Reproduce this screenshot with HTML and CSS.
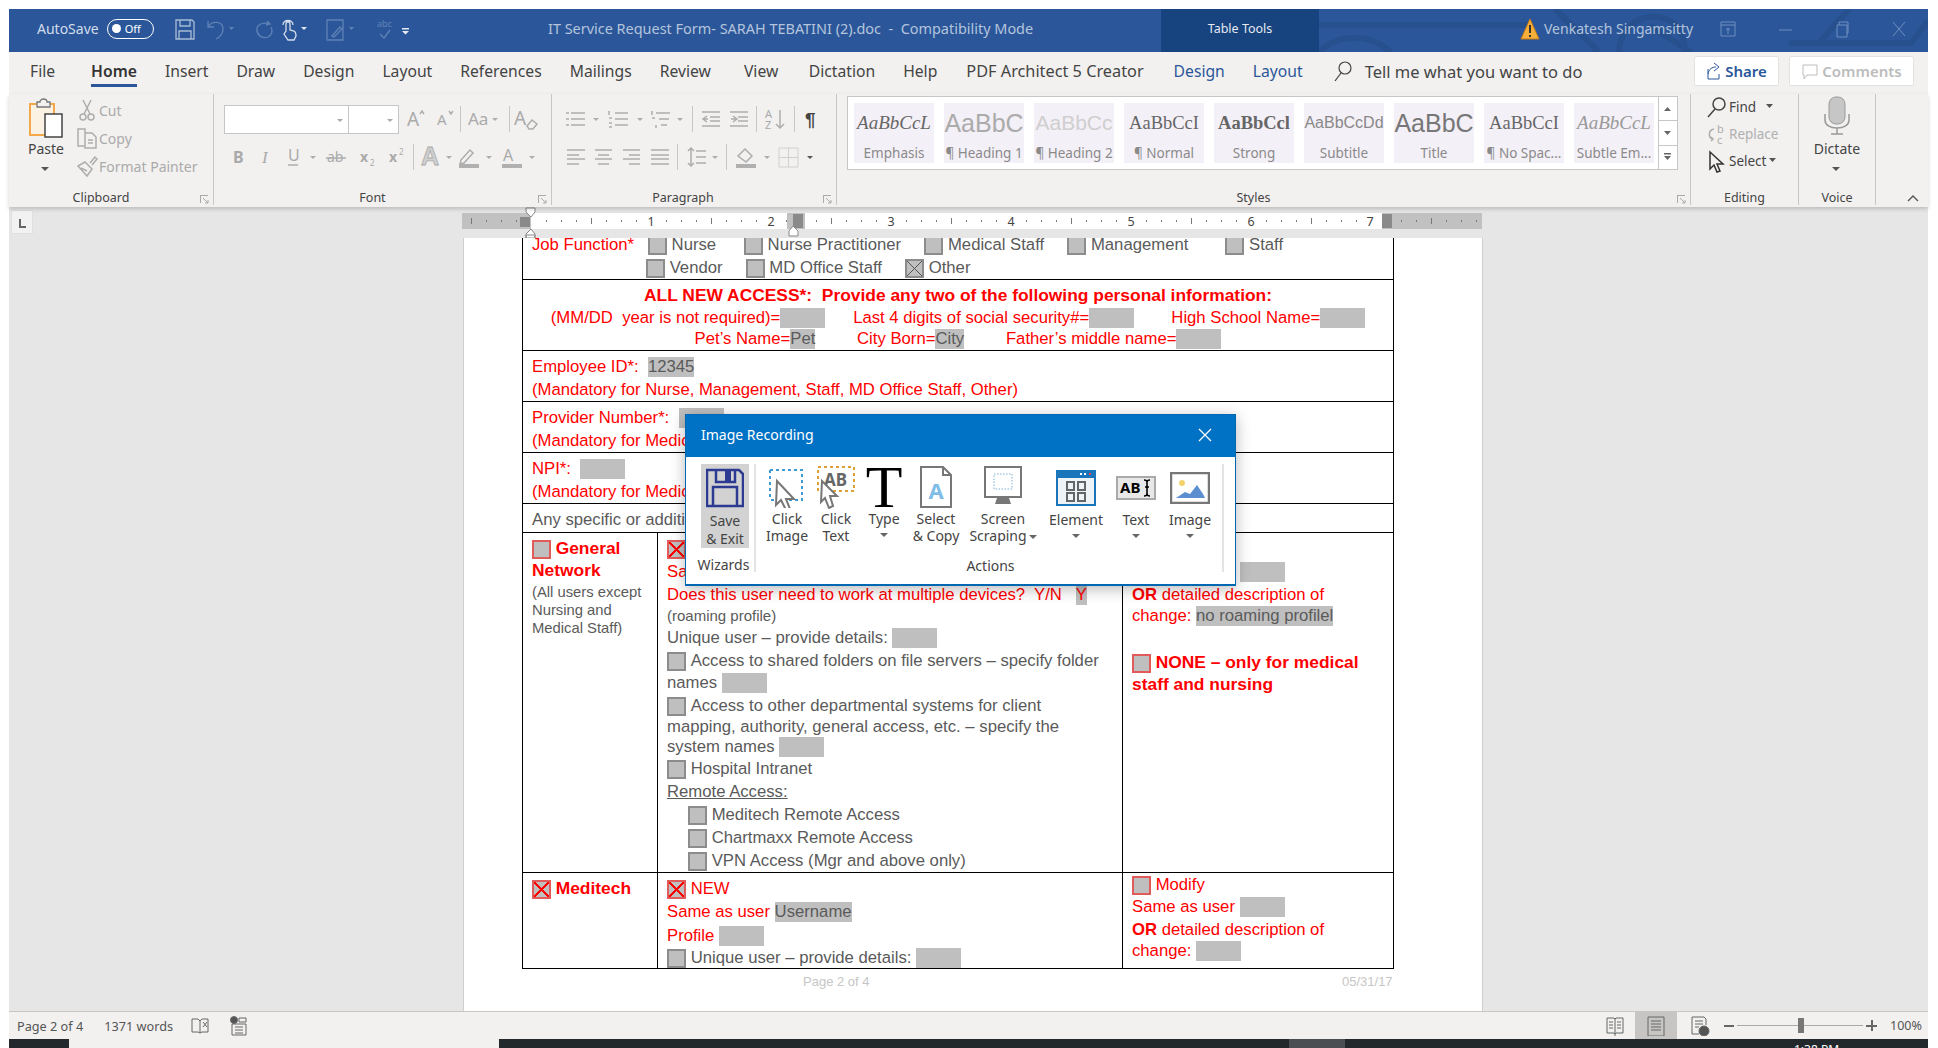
FILE: index.html
```html
<!DOCTYPE html>
<html lang="en">
<head>
  <meta charset="utf-8">
  <title>IT Service Request Form - Word</title>
  <link rel="stylesheet" href="styles.css">
</head>
<body>
<div class="window">

  <header class="titlebar">
    <svg class="deco" width="609" height="43" viewBox="0 0 609 43">
      <path d="M0 16H210M0 43C20 24 50 24 72 43M300 43C300 0 366 -8 366 43M236 0L280 43M330 16L372 43M470 34H592L609 12M500 34L530 0" />
    </svg>
    <span class="autosave">AutoSave</span>
    <span class="toggle"><i></i>Off</span>
    <svg class="q" width="22" height="24" viewBox="0 0 22 24"><path class="qs" d="M2 3h16l2 2v17H2zM6 3v6h10V3M5 22v-8h12v8"/></svg>
    <svg class="q dim" width="40" height="24" viewBox="0 0 40 24"><path d="M4 4v6h6M4 10C8 3 19 4 19 12c0 5-3 8-7 10"/><path class="qf" d="M25 10h5l-2.500 3z"/></svg>
    <svg class="q dim" width="26" height="24" viewBox="0 0 26 24"><path d="M15 4l3 3-4 1M18 7C9 4 4 9 5 14c1 5 6 8 11 6 4-2 5-6 3-10"/></svg>
    <svg class="q lite" width="38" height="24" viewBox="0 0 38 24"><path d="M8 14V7c0-3 4-3 4 0v6l4 1c2 1 2 3 2 5l-2 4h-6l-4-6zM5 8c0-6 10-6 10 0"/><path class="qf" d="M23 10h6l-3 3z"/></svg>
    <svg class="q dim" width="40" height="24" viewBox="0 0 40 24"><path d="M3 3h16v20H3zM8 19l8-9 2 2-8 8z"/><path class="qf" d="M25 10h5l-2.500 3z"/></svg>
    <svg class="q dim" width="28" height="24" viewBox="0 0 28 24"><text x="5" y="10">abc</text><path d="M8 17l4 4 6-8"/></svg>
    <svg class="q lite" width="12" height="24" viewBox="0 0 12 24"><path class="qf" d="M2 11h7v1.500H2zM2 14h7l-3.500 3.500z"/></svg>
    <span class="doctitle">IT Service Request Form- SARAH TEBATINI (2).doc&nbsp; -&nbsp; Compatibility Mode</span>
    <span class="tabletools">Table Tools</span>
    <svg class="warn" width="20" height="24" viewBox="0 0 20 24"><path d="M10 2l9 20H1z"/><path class="wm" d="M9 8h2v8H9zM9 18h2v2H9z"/></svg>
    <span class="user">Venkatesh Singamsitty</span>
    <span class="winbtns">
      <svg width="18" height="18" viewBox="0 0 18 18"><path d="M2 2h14v14H2zM2 5h14M9 14V8M7 10l2-2 2 2"/></svg>
      <svg width="18" height="18" viewBox="0 0 18 18"><path d="M3 10h13"/></svg>
      <svg width="18" height="18" viewBox="0 0 18 18"><path d="M4 5h10v12H4zM6 5V2h9v11h-1"/></svg>
      <svg width="18" height="18" viewBox="0 0 18 18"><path d="M3 2l12 14M15 2L3 16"/></svg>
    </span>
  </header>

  <nav class="tabs">
    <a class="tab first">File</a>
    <a class="tab on">Home</a>
    <a class="tab">Insert</a>
    <a class="tab">Draw</a>
    <a class="tab">Design</a>
    <a class="tab">Layout</a>
    <a class="tab">References</a>
    <a class="tab">Mailings</a>
    <a class="tab">Review</a>
    <a class="tab view">View</a>
    <a class="tab dict">Dictation</a>
    <a class="tab">Help</a>
    <a class="tab pdf">PDF Architect 5 Creator</a>
    <a class="tab blue first-ctx">Design</a>
    <a class="tab blue">Layout</a>
    <svg class="tellicon" width="20" height="24" viewBox="0 0 20 24"><circle cx="12" cy="9" r="6"/><path d="M8 14l-6 8"/></svg>
    <span class="tell">Tell me what you want to do</span>
    <span class="sharebtn"><svg width="16" height="20" viewBox="0 0 16 20"><path d="M2 8v10h11v-5M2 13C3 8 6 6 10 6M8 2l5 4-5 4"/></svg>Share</span>
    <span class="commentbtn"><svg width="18" height="20" viewBox="0 0 18 20"><path d="M2 4h14v10H6l-3 4v-4H2z"/></svg>Comments</span>
  </nav>

  <section class="ribbon">
    <div class="grp clip">
      <div class="grpbody row">
        <div class="paste">
          <svg width="36" height="42" viewBox="0 0 36 42"><path class="p1" d="M2 7h24v31H2z"/><path class="p2" d="M9 9V5h3c0-4 7-4 7 0h3v5H9z"/><path class="p3" d="M17 17h17v23H17z"/></svg>
          <span>Paste</span>
          <svg class="pc" width="10" height="6" viewBox="0 0 10 6"><path d="M0 0h8L4 4z"/></svg>
        </div>
        <div class="cliplist">
          <div><svg class="i" width="23" height="24" viewBox="0 0 23 24"><path d="M7 2l7 14M15 2L8 16"/><circle cx="7" cy="19" r="3"/><circle cx="15" cy="19" r="3"/></svg>Cut</div>
          <div><svg class="i" width="23" height="24" viewBox="0 0 23 24"><path d="M2 3h7v17H2zM9 7h7l4 4v11H9zM12 14h5M12 17h5"/></svg>Copy</div>
          <div><svg class="i" width="23" height="24" viewBox="0 0 23 24"><path d="M2 12l9 10 5-7-7-7zM14 9l5-6 2 2-5 6M5 14l6 3"/></svg>Format Painter</div>
        </div>
      </div>
      <div class="glabel">Clipboard</div>
      <svg class="launch" width="9" height="9" viewBox="0 0 9 9"><path d="M0 .5h8M.5 0v8M3 3l5 5M5 8h3V5"/></svg>
    </div>

    <div class="grp font">
      <div class="grpbody">
        <div class="frow">
          <span class="combo wide"><i></i></span><span class="combo"><i></i></span>
          <svg class="i" width="30" height="24" viewBox="0 0 30 24"><text x="8" y="19" class="big">A</text><path d="M21 7l2-3 2 3" /></svg>
          <svg class="i" width="28" height="24" viewBox="0 0 28 24"><text x="8" y="18" class="mid">A</text><path d="M20 4l2 3 2-3"/></svg>
          <span class="sep"></span>
          <svg class="i" width="42" height="24" viewBox="0 0 42 24"><text x="4" y="18" class="aa">Aa</text><path class="c" d="M28 11h6l-3 3z"/></svg>
          <span class="sep"></span>
          <svg class="i" width="28" height="24" viewBox="0 0 28 24"><text x="1" y="18" class="big">A</text><path d="M14 19l5-6 5 4-4 5h-4z"/></svg>
        </div>
        <div class="frow">
          <svg class="i" width="28" height="24" viewBox="0 0 28 24"><text x="9" y="18" class="bold">B</text></svg>
          <svg class="i" width="27" height="24" viewBox="0 0 27 24"><text x="10" y="18" class="ital">I</text></svg>
          <svg class="i" width="43" height="24" viewBox="0 0 43 24"><text x="9" y="16" class="mid2">U</text><path d="M9 20h10"/><path class="c" d="M31 11h6l-3 3z"/></svg>
          <svg class="i" width="29" height="24" viewBox="0 0 29 24"><text x="5" y="17" class="sm">ab</text><path d="M4 13h20"/></svg>
          <svg class="i" width="30" height="24" viewBox="0 0 30 24"><text x="9" y="17" class="bold sm">x</text><text x="19" y="21" class="tiny">2</text></svg>
          <svg class="i" width="29" height="24" viewBox="0 0 29 24"><text x="8" y="17" class="bold sm">x</text><text x="18" y="10" class="tiny">2</text></svg>
          <span class="sep"></span>
          <svg class="i" width="37" height="24" viewBox="0 0 37 24"><text x="4" y="20" class="huge">A</text><path class="c" d="M29 11h6l-3 3z"/></svg>
          <svg class="i" width="43" height="24" viewBox="0 0 43 24"><path d="M7 15l9-10 3 3-9 10-4 1z"/><path class="bar" d="M5 19h20v4H5z"/><path class="c" d="M32 11h6l-3 3z"/></svg>
          <svg class="i" width="42" height="24" viewBox="0 0 42 24"><text x="6" y="16" class="mid2">A</text><path class="bar" d="M5 19h20v4H5z"/><path class="c" d="M32 11h6l-3 3z"/></svg>
        </div>
      </div>
      <div class="glabel">Font</div>
      <svg class="launch" width="9" height="9" viewBox="0 0 9 9"><path d="M0 .5h8M.5 0v8M3 3l5 5M5 8h3V5"/></svg>
    </div>

    <div class="grp para">
      <div class="grpbody">
        <div class="frow">
          <svg class="i" width="44" height="24" viewBox="0 0 44 24"><path d="M6 6h3M6 12h3M6 18h3M11 6h14M11 12h14M11 18h14"/><path class="c" d="M33 11h6l-3 3z"/></svg>
          <svg class="i" width="42" height="24" viewBox="0 0 42 24"><path d="M5 4v4M5 11h3M5 16h3M5 20h3M11 6h13M11 12h13M11 18h13"/><path class="c" d="M33 11h6l-3 3z"/></svg>
          <svg class="i" width="43" height="24" viewBox="0 0 43 24"><path d="M6 4v4M6 11h3M10 18v3M10 6h14M13 12h10M15 18h6"/><path class="c" d="M31 11h6l-3 3z"/></svg>
          <span class="sep"></span>
          <svg class="i" width="29" height="24" viewBox="0 0 29 24"><path d="M6 5h18M14 10h10M14 14h10M6 19h18M11 9l-4 3 4 3M7 12h5"/></svg>
          <svg class="i" width="28" height="24" viewBox="0 0 28 24"><path d="M5 5h18M13 10h10M13 14h10M5 19h18M6 12h5M8 9l4 3-4 3"/></svg>
          <span class="sep"></span>
          <svg class="i" width="31" height="24" viewBox="0 0 31 24"><text x="5" y="11" class="tiny2">A</text><text x="5" y="22" class="tiny2">Z</text><path d="M20 3v18M16 17l4 4 4-4"/></svg>
          <span class="sep"></span>
          <svg class="i" width="32" height="24" viewBox="0 0 32 24"><text x="7" y="19" class="pil">¶</text></svg>
        </div>
        <div class="frow">
          <svg class="i" width="30" height="24" viewBox="0 0 30 24"><path d="M7 5h18M7 10h12M7 14h18M7 19h12"/></svg>
          <svg class="i" width="28" height="24" viewBox="0 0 28 24"><path d="M5 5h17M8 10h11M5 14h17M8 19h11"/></svg>
          <svg class="i" width="28" height="24" viewBox="0 0 28 24"><path d="M5 5h17M11 10h11M5 14h17M11 19h11"/></svg>
          <svg class="i" width="28" height="24" viewBox="0 0 28 24"><path d="M5 5h18M5 10h18M5 14h18M5 19h18"/></svg>
          <span class="sep"></span>
          <svg class="i" width="42" height="24" viewBox="0 0 42 24"><path d="M10 3v18M7 6l3-3 3 3M7 18l3 3 3-3M15 6h10M15 12h10M15 18h10"/><path class="c" d="M31 11h6l-3 3z"/></svg>
          <span class="sep"></span>
          <svg class="i" width="43" height="24" viewBox="0 0 43 24"><path d="M8 11l7-7 7 7-6 6z"/><path class="bar" d="M6 19h20v4H6z"/><path class="c" d="M34 11h6l-3 3z"/></svg>
          <svg class="i" width="47" height="24" viewBox="0 0 47 24"><path class="thin" d="M6 3h19v19H6zM15.500 3v19M6 12.500h19"/><path class="cd" d="M34 11h6l-3 3z"/></svg>
        </div>
      </div>
      <div class="glabel">Paragraph</div>
      <svg class="launch" width="9" height="9" viewBox="0 0 9 9"><path d="M0 .5h8M.5 0v8M3 3l5 5M5 8h3V5"/></svg>
    </div>

    <div class="grp styles">
      <div class="grpbody">
        <div class="gallery">
          <div class="gitems">
            <div class="st"><b class="s-em">AaBbCcL</b><span>Emphasis</span></div>
            <div class="st"><b class="s-h1">AaBbC</b><span>¶ Heading 1</span></div>
            <div class="st"><b class="s-h2">AaBbCc</b><span>¶ Heading 2</span></div>
            <div class="st"><b class="s-no">AaBbCcI</b><span>¶ Normal</span></div>
            <div class="st"><b class="s-no s-bo">AaBbCcl</b><span>Strong</span></div>
            <div class="st"><b class="s-su">AaBbCcDd</b><span>Subtitle</span></div>
            <div class="st"><b class="s-ti">AaBbC</b><span>Title</span></div>
            <div class="st"><b class="s-no">AaBbCcI</b><span>¶ No Spac...</span></div>
            <div class="st"><b class="s-em s-se">AaBbCcL</b><span>Subtle Em...</span></div>
          </div>
          <div class="gscroll">
            <span><svg width="8" height="6" viewBox="0 0 8 6"><path d="M0 5h7L3.500 1z"/></svg></span>
            <span><svg width="8" height="6" viewBox="0 0 8 6"><path d="M0 1h7L3.500 5z"/></svg></span>
            <span><svg width="8" height="8" viewBox="0 0 8 8"><path d="M0 0h7v1.500H0zM0 3h7L3.500 7z"/></svg></span>
          </div>
        </div>
      </div>
      <div class="glabel">Styles</div>
      <svg class="launch" width="9" height="9" viewBox="0 0 9 9"><path d="M0 .5h8M.5 0v8M3 3l5 5M5 8h3V5"/></svg>
    </div>

    <div class="grp editing">
      <div class="grpbody">
        <div class="ed dark"><svg class="i" width="24" height="24" viewBox="0 0 24 24"><circle cx="14" cy="9" r="6"/><path d="M10 14l-7 8"/></svg>Find<svg class="edc" width="8" height="5" viewBox="0 0 8 5"><path d="M0 0h7L3.500 4z"/></svg></div>
        <div class="ed"><svg class="i" width="24" height="24" viewBox="0 0 24 24"><text x="12" y="11" class="tiny2">b</text><text x="12" y="22" class="tiny2">c</text><path d="M9 7C3 8 3 16 8 17M6 15l2 2-2 2"/></svg>Replace</div>
        <div class="ed dark"><svg class="i" width="24" height="24" viewBox="0 0 24 24"><path class="cur" d="M5 3l13 12h-6l3 7-3 1-3-7-4 4z"/></svg>Select<svg class="edc close" width="8" height="5" viewBox="0 0 8 5"><path d="M0 0h7L3.500 4z"/></svg></div>
      </div>
      <div class="glabel">Editing</div>
    </div>

    <div class="grp voice">
      <div class="grpbody micwrap">
        <svg width="26" height="40" viewBox="0 0 26 40"><rect class="m1" x="5" y="1" width="16" height="27" rx="7"/><path class="m2" d="M1 18v6c0 5 5 8 12 8s12-3 12-8v-6M13 32v6M7 38h12"/></svg>
        <span>Dictate</span>
        <svg class="pc" width="10" height="6" viewBox="0 0 10 6"><path d="M0 0h8L4 4z"/></svg>
      </div>
      <div class="glabel">Voice</div>
    </div>

    <svg class="collapse" width="14" height="9" viewBox="0 0 14 9"><path d="M2 7l5-5 5 5"/></svg>
  </section>

  <main class="docarea">
    <div class="rulerrow">
      <span class="tabstop"><i></i></span>
      <svg class="ruler" width="1020" height="16" viewBox="0 0 1020 16">
        <defs>
          <pattern id="ticks" width="120" height="16" patternUnits="userSpaceOnUse" x="69">
            <path d="M15 7h1v2h-1zM30 7h1v2h-1zM45 7h1v2h-1zM75 7h1v2h-1zM90 7h1v2h-1zM105 7h1v2h-1z" fill="#777"/>
            <path d="M60 5h1v6h-1z" fill="#777"/>
          </pattern>
        </defs>
        <rect width="1020" height="16" fill="#c1c1c1"/>
        <rect x="69" width="851" height="16" fill="#fff"/>
        <rect x="325" width="18" height="16" fill="#c1c1c1"/>
        <rect width="1020" height="16" fill="url(#ticks)"/>
        <rect x="58" y="4" width="10" height="10" fill="#8a8a8a"/>
        <rect x="331" y="1" width="10" height="14" fill="#8a8a8a"/>
        <rect x="920" y="1" width="10" height="14" fill="#8a8a8a"/>
        <g class="nums">
          <text x="189" y="13">1</text><text x="309" y="13">2</text><text x="429" y="13">3</text><text x="549" y="13">4</text><text x="669" y="13">5</text><text x="789" y="13">6</text><text x="908" y="13">7</text>
        </g>
        <path class="mark" d="M64 -5h9v4l-4 5-5-5zM64 21l5-5 4 5v4h-9zM64 22h9v6h-9zM327 18l4-5 5 5v5h-9z"/>
      </svg>
    </div>

    <div class="page">
      <table class="form">
        <colgroup><col class="c1"><col class="c2"><col class="c3"></colgroup>
        <tr class="r1"><td colspan="3">
          <div class="ln"><span class="red">Job Function*</span>&nbsp;&nbsp;&nbsp;<i class="cb"></i>&nbsp;Nurse&nbsp;&nbsp;&nbsp;&nbsp;&nbsp;&nbsp;<i class="cb"></i>&nbsp;Nurse Practitioner&nbsp;&nbsp;&nbsp;&nbsp;&nbsp;<i class="cb"></i>&nbsp;Medical Staff&nbsp;&nbsp;&nbsp;&nbsp;&nbsp;<i class="cb"></i>&nbsp;Management&nbsp;&nbsp;&nbsp;&nbsp;&nbsp;&nbsp;&nbsp;&nbsp;<i class="cb"></i>&nbsp;Staff</div>
          <div class="ln in1"><i class="cb"></i>&nbsp;Vendor&nbsp;&nbsp;&nbsp;&nbsp;&nbsp;<i class="cb"></i>&nbsp;MD Office Staff&nbsp;&nbsp;&nbsp;&nbsp;&nbsp;<i class="cb x"></i>&nbsp;Other</div>
        </td></tr>
        <tr class="r2"><td colspan="3" class="ctr red">
          <div class="ln"><b class="bg">ALL NEW ACCESS*:&nbsp; Provide any two of the following personal information:</b></div>
          <div class="ln h22">(MM/DD&nbsp; year is not required)=<i class="fld"></i>&nbsp;&nbsp;&nbsp;&nbsp;&nbsp;&nbsp;Last 4 digits of social security#=<i class="fld"></i>&nbsp;&nbsp;&nbsp;&nbsp;&nbsp;&nbsp;&nbsp;&nbsp;High School Name=<i class="fld"></i></div>
          <div class="ln t">Pet’s Name=<span class="hl">Pet</span>&nbsp;&nbsp;&nbsp;&nbsp;&nbsp;&nbsp;&nbsp;&nbsp;&nbsp;City Born=<span class="hl">City</span>&nbsp;&nbsp;&nbsp;&nbsp;&nbsp;&nbsp;&nbsp;&nbsp;&nbsp;Father’s middle name=<i class="fld"></i></div>
        </td></tr>
        <tr class="r3"><td colspan="3">
          <div class="ln"><span class="red">Employee ID*:</span>&nbsp; <span class="hl">12345</span></div>
          <div class="ln red">(Mandatory for Nurse, Management, Staff, MD Office Staff, Other)</div>
        </td></tr>
        <tr class="r3"><td colspan="3">
          <div class="ln"><span class="red">Provider Number*:</span>&nbsp; <i class="fld"></i></div>
          <div class="ln red">(Mandatory for Medical Staff)</div>
        </td></tr>
        <tr class="r3"><td colspan="3">
          <div class="ln"><span class="red">NPI*:</span>&nbsp; <i class="fld"></i></div>
          <div class="ln red">(Mandatory for Medical Staff)</div>
        </td></tr>
        <tr class="r6"><td colspan="3"><div class="ln">Any specific or additional access needs:</div></td></tr>
        <tr class="r7">
          <td>
            <div class="ln red"><i class="cb r"></i>&nbsp;<b class="bg">General</b></div>
            <div class="ln t red"><b class="bg">Network</b></div>
            <div class="small first">(All users except</div>
            <div class="small">Nursing and</div>
            <div class="small">Medical Staff)</div>
          </td>
          <td>
            <div class="ln red"><i class="cb r x"></i>&nbsp;NEW</div>
            <div class="ln red">Same as user <i class="fld"></i></div>
            <div class="ln red">Does this user need to work at multiple devices?&nbsp; Y/N&nbsp; &nbsp;<span class="hl red">Y</span></div>
            <div class="ln t sm14">(roaming profile)</div>
            <div class="ln">Unique user – provide details: <i class="fld"></i></div>
            <div class="ln"><i class="cb"></i>&nbsp;Access to shared folders on file servers – specify folder</div>
            <div class="ln h22">names <i class="fld"></i></div>
            <div class="ln"><i class="cb"></i>&nbsp;Access to other departmental systems for client</div>
            <div class="ln t">mapping, authority, general access, etc. – specify the</div>
            <div class="ln t">system names <i class="fld"></i></div>
            <div class="ln"><i class="cb"></i>&nbsp;Hospital Intranet</div>
            <div class="ln"><u>Remote Access:</u></div>
            <div class="ln in2"><i class="cb"></i>&nbsp;Meditech Remote Access</div>
            <div class="ln in2"><i class="cb"></i>&nbsp;Chartmaxx Remote Access</div>
            <div class="ln in2"><i class="cb"></i>&nbsp;VPN Access (Mgr and above only)</div>
          </td>
          <td>
            <div class="ln red"><i class="cb r"></i>&nbsp;Modify</div>
            <div class="ln red">Same as user <i class="fld"></i></div>
            <div class="ln red"><b>OR</b> detailed description of</div>
            <div class="ln t red">change: <span class="hl">no roaming profilel</span></div>
            <div class="ln gap25"></div>
            <div class="ln red"><i class="cb r"></i>&nbsp;<b class="bg">NONE – only for medical</b></div>
            <div class="ln t red"><b class="bg">staff and nursing</b></div>
          </td>
        </tr>
        <tr class="r8">
          <td><div class="ln red"><i class="cb r x"></i>&nbsp;<b class="bg">Meditech</b></div></td>
          <td>
            <div class="ln red"><i class="cb r x"></i>&nbsp;NEW</div>
            <div class="ln red">Same as user <span class="hl">Username</span></div>
            <div class="ln h25 red">Profile <i class="fld"></i></div>
            <div class="ln t"><i class="cb"></i>&nbsp;Unique user – provide details: <i class="fld"></i></div>
          </td>
          <td class="tight">
            <div class="ln red"><i class="cb r"></i>&nbsp;Modify</div>
            <div class="ln h22 red">Same as user <i class="fld"></i></div>
            <div class="ln red"><b>OR</b> detailed description of</div>
            <div class="ln t red">change: <i class="fld"></i></div>
          </td>
        </tr>
      </table>
      <div class="pagefoot"><span class="pf1">Page 2 of 4</span><span class="pf2">05/31/17</span></div>
    </div>
  </main>

  <footer class="status">
    <span class="st1">Page 2 of 4</span>
    <span class="st2">1371 words</span>
    <svg class="si" width="20" height="20" viewBox="0 0 20 20"><path d="M2 3h6l2 2v12l-2-1H2zM10 5l2-2h6v13h-6l-2 1M13 6l4 5M17 6l-4 5"/></svg>
    <svg class="si cal" width="18" height="20" viewBox="0 0 18 20"><circle cx="4" cy="4" r="3.500" class="dot"/><path d="M2 8h14v11H2zM9 2h7v4H9zM5 11h8M5 14h8M5 17h8"/></svg>
    <span class="stright">
      <svg class="si" width="20" height="20" viewBox="0 0 20 20"><path d="M2 2h7l1 1 1-1h7v15h-7l-1 1-1-1H2zM10 3v17M4 6h4M4 9h4M4 12h4M12 6h4M12 9h4M12 12h4"/></svg>
      <span class="layoutbtn"><svg class="si" width="20" height="20" viewBox="0 0 20 20"><path d="M2 1h16v19H2zM5 5h10M5 8h10M5 11h10M5 14h10"/></svg></span>
      <svg class="si" width="20" height="20" viewBox="0 0 20 20"><path d="M2 1h12l2 2v6M2 1v17h7M5 5h8M5 8h8M5 11h4"/><circle cx="14" cy="15" r="5" class="dot"/></svg>
      <span class="zoom"><i class="zminus"></i><span class="zline"><i></i></span><i class="zplus"></i></span>
      <span class="zpct">100%</span>
    </span>
  </footer>

  <div class="taskbar">
    <span class="searchbox"></span>
    <span class="tbactive"></span>
    <span class="clock">1:38 PM</span>
  </div>
</div>

<aside class="dialog">
  <div class="dhead"><span>Image Recording</span>
    <svg width="14" height="14" viewBox="0 0 14 14"><path d="M1 1l12 12M13 1L1 13"/></svg>
  </div>
  <div class="dbody">
    <div class="dwiz">
      <div class="dsave">
        <svg width="38" height="40" viewBox="0 0 38 40"><path class="fl" d="M1 2h32l4 4v32H1zM10 2v12h19V2M7 38V19h24v19"/><path class="flf" d="M19 3h6v10h-6z"/></svg>
        <span>Save<br>&amp; Exit</span>
      </div>
      <div class="dlabel">Wizards</div>
    </div>
    <div class="dact">
      <div class="dgrid">
        <div class="da"><div class="di">
          <svg width="36" height="42" viewBox="0 0 36 42"><path class="dash" d="M1 4h32v30H1"/><path class="dash" d="M1 4v30"/><path class="arrow" d="M8 15l17 18h-8l4 10-4 1-5-10-5 5z"/></svg>
        </div><span>Click<br>Image</span></div>
        <div class="da"><div class="di">
          <svg width="38" height="44" viewBox="0 0 38 44"><path class="dash or" d="M1 2h36v24H1z"/><text x="7" y="21">AB</text><path class="arrow" d="M5 16l15 15h-7l3 10-4 2-4-10-4 4z"/></svg>
        </div><span>Click<br>Text</span></div>
        <div class="da"><div class="di tbig">T</div><span>Type<i class="dc"></i></span></div>
        <div class="da"><div class="di">
          <svg width="32" height="42" viewBox="0 0 32 42"><path class="docp" d="M1 1h22l8 8v32H1zM23 1v8h8"/><text x="16" y="33">A</text></svg>
        </div><span>Select<br>&amp; Copy</span></div>
        <div class="da"><div class="di">
          <svg width="40" height="42" viewBox="0 0 40 42"><path class="mon" d="M2 1h36v30H2z"/><path class="dots" d="M11 8h18v15H11z"/><path class="stand" d="M14 32h12l2 6H12z"/></svg>
        </div><span>Screen<br>Scraping<i class="dc inl"></i></span></div>
        <div class="da low"><div class="di">
          <svg width="40" height="36" viewBox="0 0 40 36"><path class="win" d="M0 0h40v36H0z"/><path class="wbg" d="M2 8h36v26H2z"/><path class="cells" d="M11 12h7v8h-7zM22 12h7v8h-7zM11 23h7v8h-7zM22 23h7v8h-7z"/><path class="wd" d="M24 3h2v2h-2zM28 3h2v2h-2z"/><path class="wr" d="M33 3h2v2h-2z"/></svg>
        </div><span>Element<i class="dc"></i></span></div>
        <div class="da low"><div class="di">
          <svg width="40" height="24" viewBox="0 0 40 24"><path class="tbx" d="M1 1h38v22H1z"/><text x="4" y="17">AB</text><path class="ibeam" d="M28 4c2 0 3 1 3 2v12c0 1 1 2 3 2M34 4c-2 0-3 1-3 2M28 20c2 0 3-1 3-2M29 11h4"/></svg>
        </div><span>Text<i class="dc"></i></span></div>
        <div class="da low"><div class="di">
          <svg width="40" height="32" viewBox="0 0 40 32"><path class="imf" d="M1 1h38v30H1z"/><circle class="sun" cx="12" cy="11" r="3"/><path class="mt" d="M6 26l9-6 5 2 7-9 4 6 2 3 2 4z"/></svg>
        </div><span>Image<i class="dc"></i></span></div>
      </div>
      <div class="dlabel wide">Actions</div>
    </div>
  </div>
</aside>
</body>
</html>
```

FILE: styles.css
```css
* { box-sizing: border-box; }
html, body { margin: 0; height: 100%; }
body { background: #fff; padding: 9px 10px 0 9px; overflow: hidden; font-family: "Noto Sans", sans-serif; color: #444; }
.window { position: relative; height: 1039px; display: flex; flex-direction: column; background: #f2f1f0; }

/* title bar */
.titlebar { position: relative; height: 43px; flex: none; display: flex; align-items: center; background: #2b579a; color: #d3dcea; padding: 0 0 4px 28px; overflow: hidden; }
.deco { position: absolute; left: 1310px; top: 0; fill: none; stroke: #27508e; stroke-width: 6; }
.autosave { font-size: 14px; }
.toggle { display: flex; align-items: center; gap: 4px; width: 47px; height: 20px; margin-left: 8px; border: 1.500px solid #fff; border-radius: 10px; font-size: 11px; color: #fff; padding-left: 4px; }
.toggle i { width: 9px; height: 9px; border-radius: 50%; background: #fff; }
.q { flex: none; fill: none; stroke-width: 1.300; display: block; margin-left: 0; }
.toggle + .q { margin-left: 20px; }
.qs { stroke: #a8bad5; }
.dim { stroke: #5f82b6; margin-left: 8px; }
.dim text { font-size: 9px; fill: #5f82b6; stroke: none; font-family: "Noto Sans"; }
.lite { stroke: #d3dcea; }
.qf { fill: #e4e9f2; stroke: none; }
.dim .qf { fill: #5f82b6; }
.doctitle { position: absolute; left: 539px; font-size: 14.450px; color: #b4c4dc; white-space: nowrap; }
.tabletools { position: absolute; left: 1152px; top: 0; width: 158px; height: 43px; padding-bottom: 4px; background: #17437e; color: #e4e9f2; font-size: 12.500px; display: flex; align-items: center; justify-content: center; }
.warn { position: absolute; left: 1511px; }
.warn path { fill: #f8b03a; stroke: #c97d15; }
.warn .wm { fill: #333; stroke: none; }
.user { position: absolute; left: 1535px; font-size: 14px; color: #b4c4dc; white-space: nowrap; }
.winbtns { position: absolute; left: 1710px; display: flex; gap: 39px; fill: none; stroke: #6f8fbf; }

/* tabs */
.tabs { height: 42px; flex: none; display: flex; align-items: center; font-size: 15.700px; color: #444; padding-left: 7px; }
.tab { position: relative; padding: 0 14px; height: 42px; line-height: 38px; white-space: nowrap; }
.tab.first { padding-right: 22px; padding-left: 14px; }
.tab.on { font-weight: 600; color: #333; }
.tab.on::after { content: ""; position: absolute; left: 14px; right: 14px; top: 32px; height: 3px; background: #2b579a; }
.tab.view { margin-left: 5px; }
.tab.dict { margin-left: 2.500px; }
.tab.pdf { margin-left: 1px; font-size: 16.300px; }
.tab.blue { color: #2b579a; }
.tab.first-ctx { margin-left: 2px; }
.tellicon { margin: 0 0 4px 16px; fill: none; stroke: #444; stroke-width: 1.200; flex: none; }
.tell { margin: 0 0 4px 12px; font-size: 16.500px; white-space: nowrap; }
.sharebtn, .commentbtn { display: flex; align-items: center; justify-content: center; gap: 3px; height: 30px; margin-bottom: 4px; background: #fff; border: 1px solid #e3e2e1; border-radius: 2px; font-weight: 600; font-size: 15px; }
.sharebtn { width: 85px; margin-left: auto; color: #2b579a; }
.sharebtn svg { fill: none; stroke: #2b579a; }
.commentbtn { width: 125px; margin-right: 14px; margin-left: 10px; color: #bcbcbc; }
.commentbtn svg { fill: none; stroke: #bcbcbc; }

/* ribbon */
.ribbon { position: relative; z-index: 1; height: 113px; flex: none; display: flex; padding-bottom: 2px; background: #f2f1f0; box-shadow: 0 2px 4px rgba(0,0,0,.18); }
.grp { position: relative; display: flex; flex-direction: column; flex: none; border-right: 1px solid #c8c7c6; }
.grpbody { flex: 1; min-height: 0; }
.row { display: flex; }
.glabel { height: 14px; line-height: 14px; font-size: 12.500px; text-align: center; color: #444; }
.launch { position: absolute; right: 4px; bottom: 1px; fill: none; stroke: #aaa; }
.clip { width: 205px; }
.clip .glabel { padding-right: 20px; }
.font { width: 338px; padding-left: 10px; }
.font .glabel { padding-right: 30px; }
.para { width: 285px; padding-left: 8px; }
.para .glabel { padding-right: 30px; }
.styles { width: 854px; }
.styles .glabel { padding-right: 20px; }
.editing { width: 108px; }
.voice { width: 77px; }
.paste { width: 60px; margin-left: 7px; display: flex; flex-direction: column; align-items: center; font-size: 14px; padding-top: 3px; }
.pc { margin-top: 9px; fill: #555; }
.p1 { fill: #fbf2e4; stroke: #f3a94a; stroke-width: 2; }
.p2 { fill: #f2f1f0; stroke: #777; stroke-width: 1.300; }
.p3 { fill: #fff; stroke: #444; stroke-width: 1.500; }
.cliplist { padding-top: 2px; font-size: 14px; color: #aaa; margin-left: 0; }
.cliplist div { display: flex; align-items: center; height: 28px; white-space: nowrap; }
.i { display: block; flex: none; fill: none; stroke: #adadad; stroke-width: 1.500; }
.i text { font-family: "Noto Sans", sans-serif; fill: #aaa; stroke: none; font-size: 12px; }
.i .big { font-size: 19px; }
.i .mid { font-size: 15px; }
.i .aa { font-size: 17px; }
.i .mid2 { font-size: 16px; }
.i .huge { font-family: "Liberation Sans"; font-size: 25px; font-weight: bold; fill: #d0d0d0; stroke: #aaa; stroke-width: .8; }
.i .bold { font-weight: bold; font-size: 16px; }
.i .sm { font-size: 14px; }
.i .tiny { font-size: 8px; }
.i .tiny2 { font-size: 11px; }
.i .ital { font-family: "Liberation Serif"; font-style: italic; font-size: 17px; }
.i .pil { font-family: "Liberation Sans"; font-size: 19px; font-weight: bold; fill: #444; }
.i .c { fill: #adadad; stroke: none; }
.i .cd { fill: #555; stroke: none; }
.i .bar { fill: #b0b0b0; stroke: none; }
.i .thin { stroke: #d0d0d0; stroke-width: 1; }
.frow { display: flex; align-items: center; height: 38px; }
.grp.font .grpbody, .grp.para .grpbody { padding-top: 6px; }
.combo { position: relative; display: block; flex: none; width: 51px; height: 29px; background: #fff; border: 1px solid #c6c6c6; margin-left: -1px; }
.combo.wide { width: 125px; margin-left: 0; }
.combo i { position: absolute; right: 5px; top: 13px; border: 3px solid transparent; border-top-color: #aaa; }
.sep { flex: none; width: 1px; height: 26px; margin: 0 3px; background: #c8c7c6; }

/* style gallery */
.gallery { display: flex; width: 831px; height: 74px; margin: 2px 0 0 10px; background: #fff; border: 1px solid #c6c6c6; }
.gitems { flex: 1; display: flex; gap: 10px; padding: 6px 0 0 6px; overflow: hidden; }
.st { flex: none; width: 80px; height: 60px; background: #f4f0f7; text-align: center; overflow: hidden; white-space: nowrap; }
.st b { display: block; height: 41px; line-height: 40px; font-weight: normal; font-family: "Liberation Sans", sans-serif; }
.st span { display: block; font-size: 13.500px; line-height: 18px; color: #8a8a8a; }
.s-em { font-family: "Liberation Serif", serif !important; font-style: italic; font-size: 19px; color: #666; }
.s-se { color: #999; }
.s-h1 { font-size: 25px; color: #ababab; }
.s-h2 { font-size: 21px; color: #cfcfcf; }
.s-no { font-family: "Liberation Serif", serif !important; font-size: 18.500px; color: #666; }
.s-bo { font-weight: bold !important; }
.s-su { font-size: 16px; color: #888; }
.s-ti { font-size: 25px; color: #777; }
.gscroll { width: 19px; display: flex; flex-direction: column; border-left: 1px solid #c6c6c6; background: #fff; }
.gscroll span { flex: 1; display: flex; align-items: center; justify-content: center; border-bottom: 1px solid #c6c6c6; fill: #666; }
.gscroll span:last-child { border-bottom: 0; }

/* editing, voice */
.editing .grpbody { padding: 0 0 0 14px; margin-top: -1px; }
.ed { display: flex; align-items: center; height: 27px; font-size: 13.500px; color: #b0b0b0; white-space: nowrap; }
.ed.dark { color: #444; }
.ed.dark .i { stroke: #444; }
.edc { margin-left: 10px; fill: #555; }
.edc.close { margin-left: 3px; }
.cur { stroke: #333; }
.micwrap { display: flex; flex-direction: column; align-items: center; font-size: 14px; padding-top: 2px; }
.micwrap span { margin-top: 3px; }
.m1 { fill: #c6c6c6; stroke: #999; }
.m2 { fill: none; stroke: #999; stroke-width: 1.500; }
.collapse { align-self: flex-end; margin: 0 0 2px 30px; fill: none; stroke: #555; stroke-width: 1.400; }

/* document */
.docarea { position: relative; flex: 1; min-height: 0; display: flex; flex-direction: column; background: #e6e6e6; overflow: hidden; }
.rulerrow { position: relative; flex: none; height: 31px; padding: 6px 0 0 453px; }
.tabstop { position: absolute; left: 2px; top: 3px; width: 22px; height: 24px; background: #f2f2f2; border: 1px solid #e0e0e0; }
.tabstop i { position: absolute; left: 7px; top: 8px; width: 7px; height: 9px; border: solid #666; border-width: 0 0 2px 2px; }
.ruler { display: block; overflow: visible; }
.nums text { font-family: "Noto Sans", sans-serif; font-size: 12.500px; fill: #444; text-anchor: middle; }
.mark { fill: #fff; stroke: #888; }
.page { flex: 1; min-height: 0; width: 1020px; margin-left: 454px; padding-left: 58px; background: #fff; border: solid #cfcfcf; border-width: 0 1px; overflow: hidden; position: relative; font-family: "Liberation Sans", Arial, sans-serif; font-size: 16.700px; color: #5a5a5a; }
.form { width: 871px; margin-top: -5px; table-layout: fixed; border-collapse: collapse; border: 0; }
.c1 { width: 135px; }
.c2 { width: 465px; }
.c3 { width: 271px; }
.form td { border: 1px solid #000; padding: 0 9px; vertical-align: top; }
.form .tight { padding-top: 0; }
.r1 td { border-top: 0; height: 46px; }
.r2 td { height: 71px; padding-top: 4px; }
.r3 td { height: 51px; padding-top: 4px; }
.r6 td { height: 29px; padding-top: 4px; }
.r7 td { height: 340px; padding-top: 4px; }
.r8 td { height: 95px; padding-top: 4px; }
.r8 td.tight { padding-top: 0; }
.ln { height: 23px; line-height: 23px; white-space: nowrap; }
.ln.t { height: 20px; line-height: 20px; }
.ln.h22 { height: 22px; line-height: 22px; }
.ln.h25 { height: 25px; line-height: 25px; }
.ln.gap25 { height: 25px; }
.in1 { padding-left: 114px; }
.in2 { padding-left: 21px; }
.red { color: #f00; }
.ctr { text-align: center; }
.bg { font-size: 17.400px; }
.sm14 { font-size: 15px; }
.small { font-size: 14.800px; line-height: 18px; }
.small.first { margin-top: 3px; }
.cb { display: inline-block; position: relative; width: 19px; height: 19px; vertical-align: -5px; background: #bfbfbf; border: 2px solid #8c8c8c; }
.cb.r { border-color: #e25b5b; }
.cb.x { background: #bfbfbf linear-gradient(to top right, transparent 47%, #555 47%, #555 53%, transparent 53%); }
.cb.x::after { content: ""; position: absolute; inset: 0; background: linear-gradient(to bottom right, transparent 47%, #555 47%, #555 53%, transparent 53%); }
.cb.r.x { background: #bfbfbf linear-gradient(to top right, transparent 46%, #f00 46%, #f00 54%, transparent 54%); }
.cb.r.x::after { background: linear-gradient(to bottom right, transparent 46%, #f00 46%, #f00 54%, transparent 54%); }
.fld { display: inline-block; width: 45px; height: 20px; vertical-align: -5px; background: #bfbfbf; }
.hl { display: inline-block; height: 20px; line-height: 20px; background: #bfbfbf; color: #5a5a5a; }
.hl.red { color: #f00; }
.pagefoot { position: relative; height: 20px; margin-top: 5px; font-size: 13px; color: #c6c6c6; }
.pf1 { position: absolute; left: 281px; }
.pf2 { position: absolute; left: 820px; }

/* status bar */
.status { height: 28px; flex: none; display: flex; align-items: center; font-size: 12.700px; color: #555; background: #f2f1f0; border-top: 1px solid #c6c6c6; }
.st1 { margin-left: 8px; }
.st2 { margin-left: 21px; margin-right: 17px; }
.si { flex: none; fill: none; stroke: #666; stroke-width: 1; display: block; }
.si.cal { margin-left: 20px; }
.dot { fill: #555; }
.stright { margin-left: auto; display: flex; align-items: center; }
.layoutbtn { display: flex; align-items: center; justify-content: center; width: 42px; height: 27px; margin: 0 13px 0 10px; background: #c6c5c4; }
.zoom { display: flex; align-items: center; margin-left: 14px; }
.zminus { width: 10px; height: 2px; background: #666; }
.zline { position: relative; width: 126px; height: 1px; margin: 0 3px; background: #aaa; }
.zline i { position: absolute; left: 61px; top: -7px; width: 6px; height: 15px; background: #777; }
.zplus { position: relative; width: 11px; height: 2px; background: #666; }
.zplus::after { content: ""; position: absolute; left: 4.500px; top: -4.500px; width: 2px; height: 11px; background: #666; }
.zpct { width: 38px; margin-left: 13px; font-size: 12.500px; }

.taskbar { position: relative; height: 9px; flex: none; background: #23282d; overflow: hidden; color: #fff; font-size: 12px; }
.searchbox { position: absolute; left: 60px; width: 430px; height: 9px; background: #f2f1f0; }
.tbactive { position: absolute; left: 1280px; width: 56px; height: 9px; background: #4b4f54; }
.clock { position: absolute; left: 1785px; top: 4px; line-height: 14px; }

/* floating recording window */
.dialog { position: absolute; left: 685px; top: 414px; width: 551px; height: 172px; background: #fff; border: 1px solid #0067b2; border-bottom-width: 2px; box-shadow: 0 3px 14px rgba(0,0,0,.28); font-family: "Noto Sans", sans-serif; font-size: 14px; color: #444; }
.dhead { display: flex; align-items: center; justify-content: space-between; height: 42px; padding: 0 23px 3px 15px; background: #0072c6; color: #fff; font-size: 14px; }
.dhead svg { fill: none; stroke: #fff; stroke-width: 1.300; }
.dbody { display: flex; height: 128px; padding-top: 7px; }
.dwiz { width: 70px; padding-left: 15px; border-right: 2px solid #e4e4e4; height: 108px; }
.dsave { width: 48px; height: 84px; background: #d2d2d2; text-align: center; line-height: 18px; }
.dsave svg { display: block; margin: 0 auto; height: 48px; }
.fl { fill: none; stroke: #2c3a92; stroke-width: 2.500; }
.flf { fill: #2c3a92; }
.dlabel { margin-top: 3px; line-height: 28px; text-align: center; white-space: nowrap; margin-left: -8px; }
.dlabel.wide { margin: 4px 0 0 -3px; }
.dact { flex: none; width: 468px; height: 108px; padding-left: 6px; border-right: 2px solid #e4e4e4; }
.dgrid { display: grid; height: 84px; grid-template-columns: 50px 48px 48px 56px 78px 68px 52px 56px; }
.da { display: flex; flex-direction: column; align-items: center; text-align: center; line-height: 17px; white-space: nowrap; }
.di { height: 46px; display: flex; align-items: center; justify-content: center; }
.da.low .di { height: 47px; }
.dc { display: block; width: 0; height: 0; margin: 6px auto 0; border: 4px solid transparent; border-top-color: #666; border-bottom: 0; }
.dc.inl { display: inline-block; margin: 0 0 2px 2px; }
.tbig { font-family: "Liberation Serif", serif; font-size: 60px; line-height: 46px; color: #000; }
.dash { fill: none; stroke: #3c9ad6; stroke-width: 2; stroke-dasharray: 3 3; }
.dash.or { stroke: #dda032; }
.arrow { fill: #fff; stroke: #777; stroke-width: 2; }
.da text { font-family: "Noto Sans", sans-serif; font-weight: bold; font-size: 17px; fill: #666; }
.docp { fill: #fff; stroke: #777; stroke-width: 2; }
.da .docp + text { fill: #7fbde6; text-anchor: middle; font-size: 22px; }
.mon { fill: #fff; stroke: #777; stroke-width: 2; }
.dots { fill: none; stroke: #7cb2dc; stroke-dasharray: 1.500 1.500; }
.stand { fill: #777; }
.win { fill: #1b75bb; }
.wbg { fill: #eef3f8; }
.cells { fill: none; stroke: #666; stroke-width: 2; }
.wd { fill: #fff; }
.wr { fill: #f04050; }
.tbx { fill: #e8e8e8; stroke: #aaa; stroke-width: 2; }
.da .tbx + text { fill: #000; font-size: 15px; }
.ibeam { fill: none; stroke: #000; stroke-width: 1.600; }
.imf { fill: #fff; stroke: #777; stroke-width: 2.500; }
.sun { fill: #f3d26e; }
.mt { fill: #5b8fd0; }
```
